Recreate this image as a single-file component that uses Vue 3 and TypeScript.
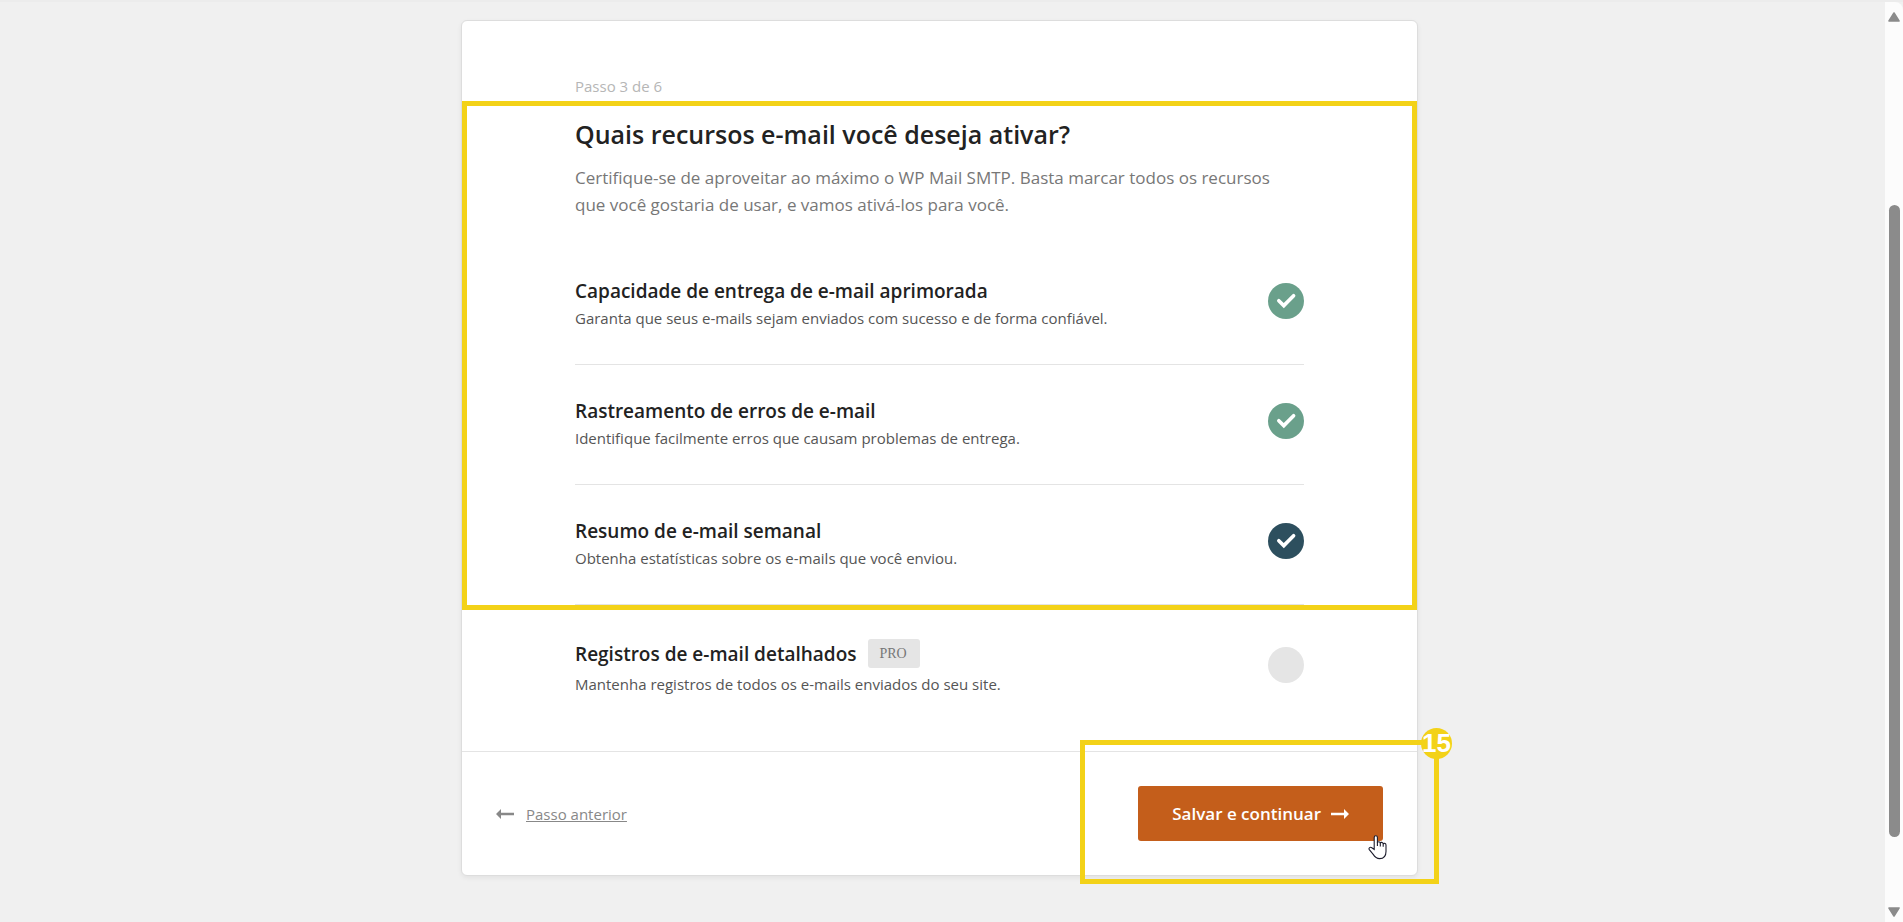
<script setup lang="ts">
import { ref } from 'vue'

interface Feature {
  id: string
  title: string
  text: string
  checked: boolean
  locked: boolean
}

const highlighted = ref<Feature[]>([
  {
    id: 'deliverability',
    title: 'Capacidade de entrega de e-mail aprimorada',
    text: 'Garanta que seus e-mails sejam enviados com sucesso e de forma confiável.',
    checked: true,
    locked: true,
  },
  {
    id: 'errors',
    title: 'Rastreamento de erros de e-mail',
    text: 'Identifique facilmente erros que causam problemas de entrega.',
    checked: true,
    locked: true,
  },
  {
    id: 'summary',
    title: 'Resumo de e-mail semanal',
    text: 'Obtenha estatísticas sobre os e-mails que você enviou.',
    checked: true,
    locked: false,
  },
])

const logs = ref<Feature>({
  id: 'logs',
  title: 'Registros de e-mail detalhados',
  text: 'Mantenha registros de todos os e-mails enviados do seu site.',
  checked: false,
  locked: false,
})
</script>

<template>
  <div class="page">
    <main class="content">
      <form class="card" @submit.prevent>
        <p class="step">Passo 3 de 6</p>

        <section class="features">
          <h1>Quais recursos e-mail você deseja ativar?</h1>
          <p class="intro">
            Certifique-se de aproveitar ao máximo o WP Mail SMTP. Basta marcar todos os recursos
            que você gostaria de usar, e vamos ativá-los para você.
          </p>
          <div v-for="f in highlighted" :key="f.id" class="feature">
            <label :for="f.id" class="feature-text">
              <span class="feature-title">{{ f.title }}</span>
              <span class="feature-desc">{{ f.text }}</span>
            </label>
            <span class="tick">
              <input :id="f.id" v-model="f.checked" type="checkbox" :class="{ locked: f.locked }" />
              <svg v-if="f.checked" viewBox="0 0 36 36" aria-hidden="true">
                <path d="M10.8 17.7 L15.8 22.6 L25.6 12.7" />
              </svg>
            </span>
          </div>
          <span class="frame" aria-hidden="true"></span>
        </section>

        <div class="feature last">
          <label :for="logs.id" class="feature-text">
            <span class="feature-title">{{ logs.title }}<span class="pro">PRO</span></span>
            <span class="feature-desc">{{ logs.text }}</span>
          </label>
          <span class="tick">
            <input :id="logs.id" v-model="logs.checked" type="checkbox" />
            <svg v-if="logs.checked" viewBox="0 0 36 36" aria-hidden="true">
              <path d="M10.8 17.7 L15.8 22.6 L25.6 12.7" />
            </svg>
          </span>
        </div>

        <footer class="actions">
          <a href="#" class="back">
            <svg width="18" height="10" viewBox="0 0 18 10" aria-hidden="true">
              <path d="M0 5 L5 0 V3.8 H18 V6.2 H5 V10 Z" />
            </svg>
            <span>Passo anterior</span>
          </a>
          <button type="submit" class="save">
            <span>Salvar e continuar</span>
            <svg width="18" height="10" viewBox="0 0 18 10" aria-hidden="true">
              <path d="M18 5 L13 0 V3.8 H0 V6.2 H13 V10 Z" />
            </svg>
          </button>
          <span class="frame callout" aria-hidden="true"></span>
          <span class="number">15</span>
          <svg class="pointer" width="20" height="25" viewBox="0 0 20 25" aria-hidden="true">
            <path
              d="M6.2 14.5 V2.4 C6.2 0.2 9.4 0.2 9.4 2.4 V8 C9.6 6.4 12 6.4 12.3 8.2 C12.6 6.9 14.9 7 15.2 9 C15.6 7.9 18 8 18 10 V16.5 C18 21 15.5 23.6 11.6 23.6 C8.2 23.6 6.7 21.8 5.2 19.4 L1.3 14.6 C0.3 13 2.3 11.6 3.8 12.7 Z"
            />
            <path class="fingers" d="M9.4 7.6 V11 M12.3 8 V11.4 M15.2 9 V11.8" />
          </svg>
        </footer>
      </form>
    </main>

    <div class="scrollbar" aria-hidden="true">
      <svg width="14" height="10" viewBox="0 0 14 10">
        <path d="M7 1 L12 9 H2 Z" />
      </svg>
      <span class="track"><span class="thumb"></span></span>
      <svg width="14" height="10" viewBox="0 0 14 10">
        <path d="M7 9 L12 1 H2 Z" />
      </svg>
    </div>
  </div>
</template>

<style>
body {
  background: #f0f0f0;
}
</style>

<style scoped>
* {
  box-sizing: border-box;
}

.page {
  display: flex;
  min-height: 100vh;
  border-top: 2px solid #ececec;
  background: #f0f0f0;
  font-family: 'Segoe UI', 'Open Sans', 'Noto Sans', sans-serif;
}

.content {
  flex: 1;
  padding: 18px 6px 45px 0;
}

.card {
  max-width: 957px;
  margin: 0 auto;
  border: 1px solid #dddddd;
  border-radius: 6px;
  background: #ffffff;
  box-shadow: 0 2px 5px rgba(0, 0, 0, 0.06);
}

p,
h1 {
  margin: 0;
}

.step {
  padding: 53px 113px 3px;
  color: #b6b6b6;
  font-size: 15px;
  line-height: 24px;
}

.features {
  position: relative;
  padding: 15px 113px 5px;
}

h1 {
  color: #222222;
  font-size: 25px;
  font-weight: 600;
  line-height: 36px;
}

.intro {
  padding: 12px 0 27px;
  color: #777777;
  font-size: 17px;
  line-height: 27px;
}

.feature {
  display: flex;
  align-items: flex-start;
  justify-content: space-between;
  height: 120px;
  padding-top: 32px;
  border-bottom: 1px solid #e4e4e4;
}

.feature-text {
  display: flex;
  flex-direction: column;
}

.feature-title {
  display: flex;
  align-items: center;
  color: #222222;
  font-size: 19px;
  font-weight: 600;
  line-height: 28px;
}

.feature-desc {
  color: #555555;
  font-size: 15px;
  line-height: 26px;
}

.tick {
  display: grid;
  flex: none;
  width: 36px;
  height: 36px;
  margin-top: 6px;
}

.tick input,
.tick svg {
  grid-area: 1 / 1;
  width: 36px;
  height: 36px;
  margin: 0;
}

.tick input {
  appearance: none;
  border-radius: 50%;
  background: #e5e5e5;
  cursor: pointer;
}

.tick input:checked {
  background: #2d4f5e;
}

.tick input.locked:checked {
  background: #6aa08b;
}

.tick svg {
  pointer-events: none;
}

.tick path {
  fill: none;
  stroke: #ffffff;
  stroke-width: 3.6;
  stroke-linecap: round;
}

.last {
  height: 141px;
  margin: 0 113px;
  padding-top: 29px;
  border: 0;
}

.last .feature-text {
  gap: 3px;
}

.last .tick {
  margin-top: 8px;
}

.pro {
  margin-left: 12px;
  padding: 0 13px 0 11px;
  border-radius: 3px;
  background: #e5e5e5;
  color: #777777;
  font-family: 'Liberation Serif', serif;
  font-size: 14px;
  font-weight: 400;
  line-height: 29px;
}

.actions {
  position: relative;
  display: flex;
  align-items: center;
  justify-content: space-between;
  padding: 34px;
  border-top: 1px solid #e4e4e4;
}

.back {
  display: flex;
  align-items: center;
  gap: 12px;
  color: #888888;
  font-size: 15px;
  line-height: 24px;
  text-decoration: none;
}

.back span {
  text-decoration: underline;
}

.back svg {
  fill: #888888;
}

.save {
  display: flex;
  align-items: center;
  gap: 10px;
  padding: 0 34px;
  border: 0;
  border-radius: 3px;
  background: #c45e1b;
  color: #ffffff;
  font-family: inherit;
  font-size: 17px;
  font-weight: 600;
  line-height: 55px;
  cursor: pointer;
}

.save svg {
  fill: #ffffff;
}

.frame {
  position: absolute;
  inset: 0;
  border: 5px solid #f3d218;
  pointer-events: none;
}

.callout {
  inset: -12px -22px -9px auto;
  width: 359px;
}

.number {
  position: absolute;
  top: -24px;
  right: -35px;
  width: 31px;
  height: 31px;
  border-radius: 50%;
  background: #f3d218;
  color: #ffffff;
  font-family: 'Liberation Sans', Arial, sans-serif;
  font-size: 26px;
  font-weight: 700;
  line-height: 31px;
  text-align: center;
}

.pointer {
  position: absolute;
  right: 29px;
  bottom: 15px;
  fill: #ffffff;
  stroke: #1c1c2c;
  stroke-width: 1.1;
}

.fingers {
  fill: none;
}

.scrollbar {
  display: flex;
  flex-direction: column;
  align-items: center;
  width: 18px;
  padding: 10px 0 5px;
  border-top-right-radius: 8px;
  background: #fcfcfc;
}

.scrollbar svg {
  flex: none;
  fill: #8b8b8b;
  stroke: #8b8b8b;
  stroke-width: 1.6;
  stroke-linejoin: round;
}

.track {
  display: flex;
  flex: 1;
  padding: 183px 0 70px;
}

.thumb {
  width: 11px;
  border-radius: 6px;
  background: #8b8b8b;
}
</style>
